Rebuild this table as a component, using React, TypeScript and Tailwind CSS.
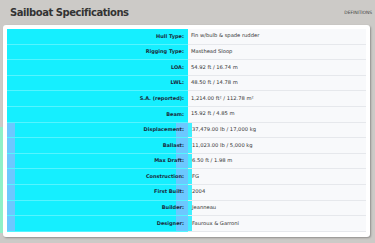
import React from "react";

const rows: [string, string, boolean][] = [
  ["Hull Type:", "Fin w/bulb & spade rudder", false],
  ["Rigging Type:", "Masthead Sloop", false],
  ["LOA:", "54.92 ft / 16.74 m", false],
  ["LWL:", "48.50 ft / 14.78 m", false],
  ["S.A. (reported):", "1,214.00 ft² / 112.78 m²", false],
  ["Beam:", "15.92 ft / 4.85 m", false],
  ["Displacement:", "37,479.00 lb / 17,000 kg", true],
  ["Ballast:", "11,023.00 lb / 5,000 kg", true],
  ["Max Draft:", "6.50 ft / 1.98 m", true],
  ["Construction:", "FG", true],
  ["First Built:", "2004", true],
  ["Builder:", "Jeanneau", true],
  ["Designer:", "Fauroux & Garroni", true],
];

export default function App() {
  return (
    <div
      className="relative w-[375px] h-[243px] bg-[#cccac7] overflow-hidden"
      style={{ fontFamily: '"DejaVu Sans", Verdana, sans-serif' }}
    >
      <div className="flex items-center justify-between h-[25px] pl-[10px] pr-[3px]">
        <div className="text-[10px] font-bold tracking-[-0.45px] text-[#333]">Sailboat Specifications</div>
        <div className="text-[4.5px] text-[#444] pt-[2px] tracking-[-0.1px]">DEFINITIONS</div>
      </div>
      <div className="ml-[3px] mr-[5px] h-[212px] bg-white rounded-[3px] shadow-[1px_1px_2px_rgba(0,0,0,0.3)] pt-[4px] pl-[4px] pr-[4px]">
        <div className="flex flex-col">
          {rows.map(([label, value, hl]) => (
            <div key={label} className="flex h-[15.6px]">
              <div
                className={
                  "w-[181px] flex items-center justify-end pr-[4px] text-[5px] font-bold text-[#1a2b3c] border-b border-[#55f4ff] " +
                  (hl
                    ? "bg-[linear-gradient(to_right,#6cc8ff_8px,#15efff_8px,#15efff_169px,#6cc8ff_169px)]"
                    : "bg-[#15efff]")
                }
              >
                {label}
              </div>
              <div className="flex-1 flex bg-[#f8f9fb] border-b border-[#e6e8ec]">
                {hl && <div className="w-[4px] bg-[#3ff0ff]" />}
                <div className={"flex items-center text-[5.2px] text-[#333] " + (hl ? "pl-0" : "pl-[3px]")}>{value}</div>
              </div>
            </div>
          ))}
        </div>
      </div>
      <div className="absolute left-0 top-[127px] w-[3px] h-[106px] bg-[#8ef0c8]" />
    </div>
  );
}
